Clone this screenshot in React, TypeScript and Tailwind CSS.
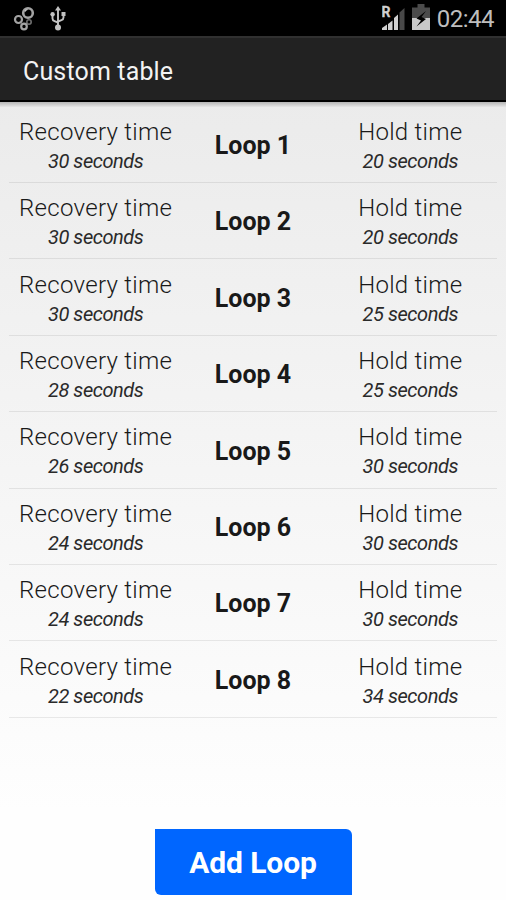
interface Loop {
  id: number;
  recovery: number;
  hold: number;
}

const LOOPS: Loop[] = [
  { id: 1, recovery: 30, hold: 20 },
  { id: 2, recovery: 30, hold: 20 },
  { id: 3, recovery: 30, hold: 25 },
  { id: 4, recovery: 28, hold: 25 },
  { id: 5, recovery: 26, hold: 30 },
  { id: 6, recovery: 24, hold: 30 },
  { id: 7, recovery: 24, hold: 30 },
  { id: 8, recovery: 22, hold: 34 },
];

function BubblesIcon() {
  return (
    <svg width="22" height="26" viewBox="0 0 22 26" fill="none" stroke="#a3a3a3">
      <circle cx="15" cy="8" r="4.8" strokeWidth="2.6" />
      <circle cx="5.5" cy="14.5" r="3.5" strokeWidth="2.2" />
      <circle cx="16" cy="17" r="2.2" stroke="#6f6f6f" strokeWidth="1.6" />
      <circle cx="11" cy="21.5" r="2.8" strokeWidth="2.2" />
      <path d="M12 6.5a4 4 0 0 1 2.5-2" stroke="#d4d4d4" strokeWidth="1.2" />
    </svg>
  );
}

function UsbIcon() {
  return (
    <svg width="16" height="26" viewBox="0 0 16 26" fill="none" stroke="#c2c2c2" strokeWidth="1.9">
      <path d="M8 4v18M2.5 10v3.5q0 2 2 2.7L8 17.5M13.5 10v2.5q0 2-2 2.7L8 16.5" />
      <path d="M8 1 11 5.5H5z" fill="#c2c2c2" stroke="none" />
      <circle cx="2.6" cy="9.3" r="2.2" fill="#c2c2c2" stroke="none" />
      <path d="M11.5 7h4v4h-4z" fill="#c2c2c2" stroke="none" />
      <circle cx="8" cy="22.5" r="3" fill="#c2c2c2" stroke="none" />
    </svg>
  );
}

function SignalIcon() {
  return (
    <svg width="23" height="26" viewBox="0 0 23 26">
      <path d="M0 25v-2l5-3.5V25z" fill="#d0d0d0" />
      <path d="M6 25v-6l4.5-3.5V25z" fill="#d0d0d0" />
      <path d="M12 25V13l4-3.5V25z" fill="#d0d0d0" />
      <path d="M17.500 25V7.500l5-4.500V25z" fill="#484848" />
      <text x="-.5" y="11.5" fill="#d0d0d0" stroke="#d0d0d0" strokeWidth=".3" className="font-[Roboto] text-[14px] font-bold">
        R
      </text>
    </svg>
  );
}

function BatteryIcon() {
  return (
    <svg width="18" height="26" viewBox="0 0 18 26">
      <path d="M5.5 0h7v3.5H18V26H0V3.5h5.5z" fill="#4b4b4b" />
      <path d="M0 14h18v12H0z" fill="#c9c9c9" />
      <path d="M14 7 4.5 14.5l4.5 2-4.500 6 9.500-7.500-4.500-2z" fill="#000" />
    </svg>
  );
}

function TimeCell({ label, seconds }: { label: string; seconds: number }) {
  return (
    <div className="flex flex-col items-center">
      <p className="text-[24px] leading-[30px] font-light tracking-[0.28px] whitespace-nowrap">{label}</p>
      <p className="text-[20px] leading-7 tracking-[-0.45px] text-[#2a2a2a] italic">{seconds} seconds</p>
    </div>
  );
}

export default function App() {
  return (
    <div className="flex h-[900px] w-[506px] flex-col overflow-hidden bg-linear-to-b from-[#ebebeb] from-10% to-[#fefefe] to-90% font-[Roboto,sans-serif] text-[#191919]">
      <header className="shrink-0">
        <div className="flex h-9 items-center justify-between bg-black pr-3 pl-[13px]">
          <div className="flex items-center gap-[15px]">
            <BubblesIcon />
            <UsbIcon />
          </div>
          <div className="flex items-center">
            <SignalIcon />
            <span className="mb-0.5 ml-[7px]">
              <BatteryIcon />
            </span>
            <span className="ml-[7px] pt-px text-[24px] leading-9 tracking-[-0.5px] text-[#bebebe]">02:44</span>
          </div>
        </div>
        <div className="flex h-[66px] items-center border-t-2 border-b-2 border-t-[#303030] border-b-black bg-[#222] pt-[5px] pl-[23px]">
          <h1 className="text-[25px] tracking-[0.15px] text-[#f3f3f3]">Custom table</h1>
        </div>
        <div className="h-[4.6px] bg-linear-to-b from-[#b5b5b5] to-[#e6e6e6]" />
      </header>

      <ul className="px-[9px]">
        {LOOPS.map((loop) => (
          <li
            key={loop.id}
            className="grid h-[76.4px] grid-cols-3 items-center border-b border-black/8 pt-[3px] pr-2 pl-2"
          >
            <TimeCell label="Recovery time" seconds={loop.recovery} />
            <p className="text-center text-[25px] font-bold">Loop {loop.id}</p>
            <TimeCell label="Hold time" seconds={loop.hold} />
          </li>
        ))}
      </ul>

      <button
        type="button"
        className="mx-auto mt-auto mb-[5px] h-[66px] w-[197px] rounded-tr-md rounded-bl-md bg-[#0066ff] pt-px text-[30px] font-bold tracking-[-0.1px] text-white"
      >
        Add Loop
      </button>
    </div>
  );
}
